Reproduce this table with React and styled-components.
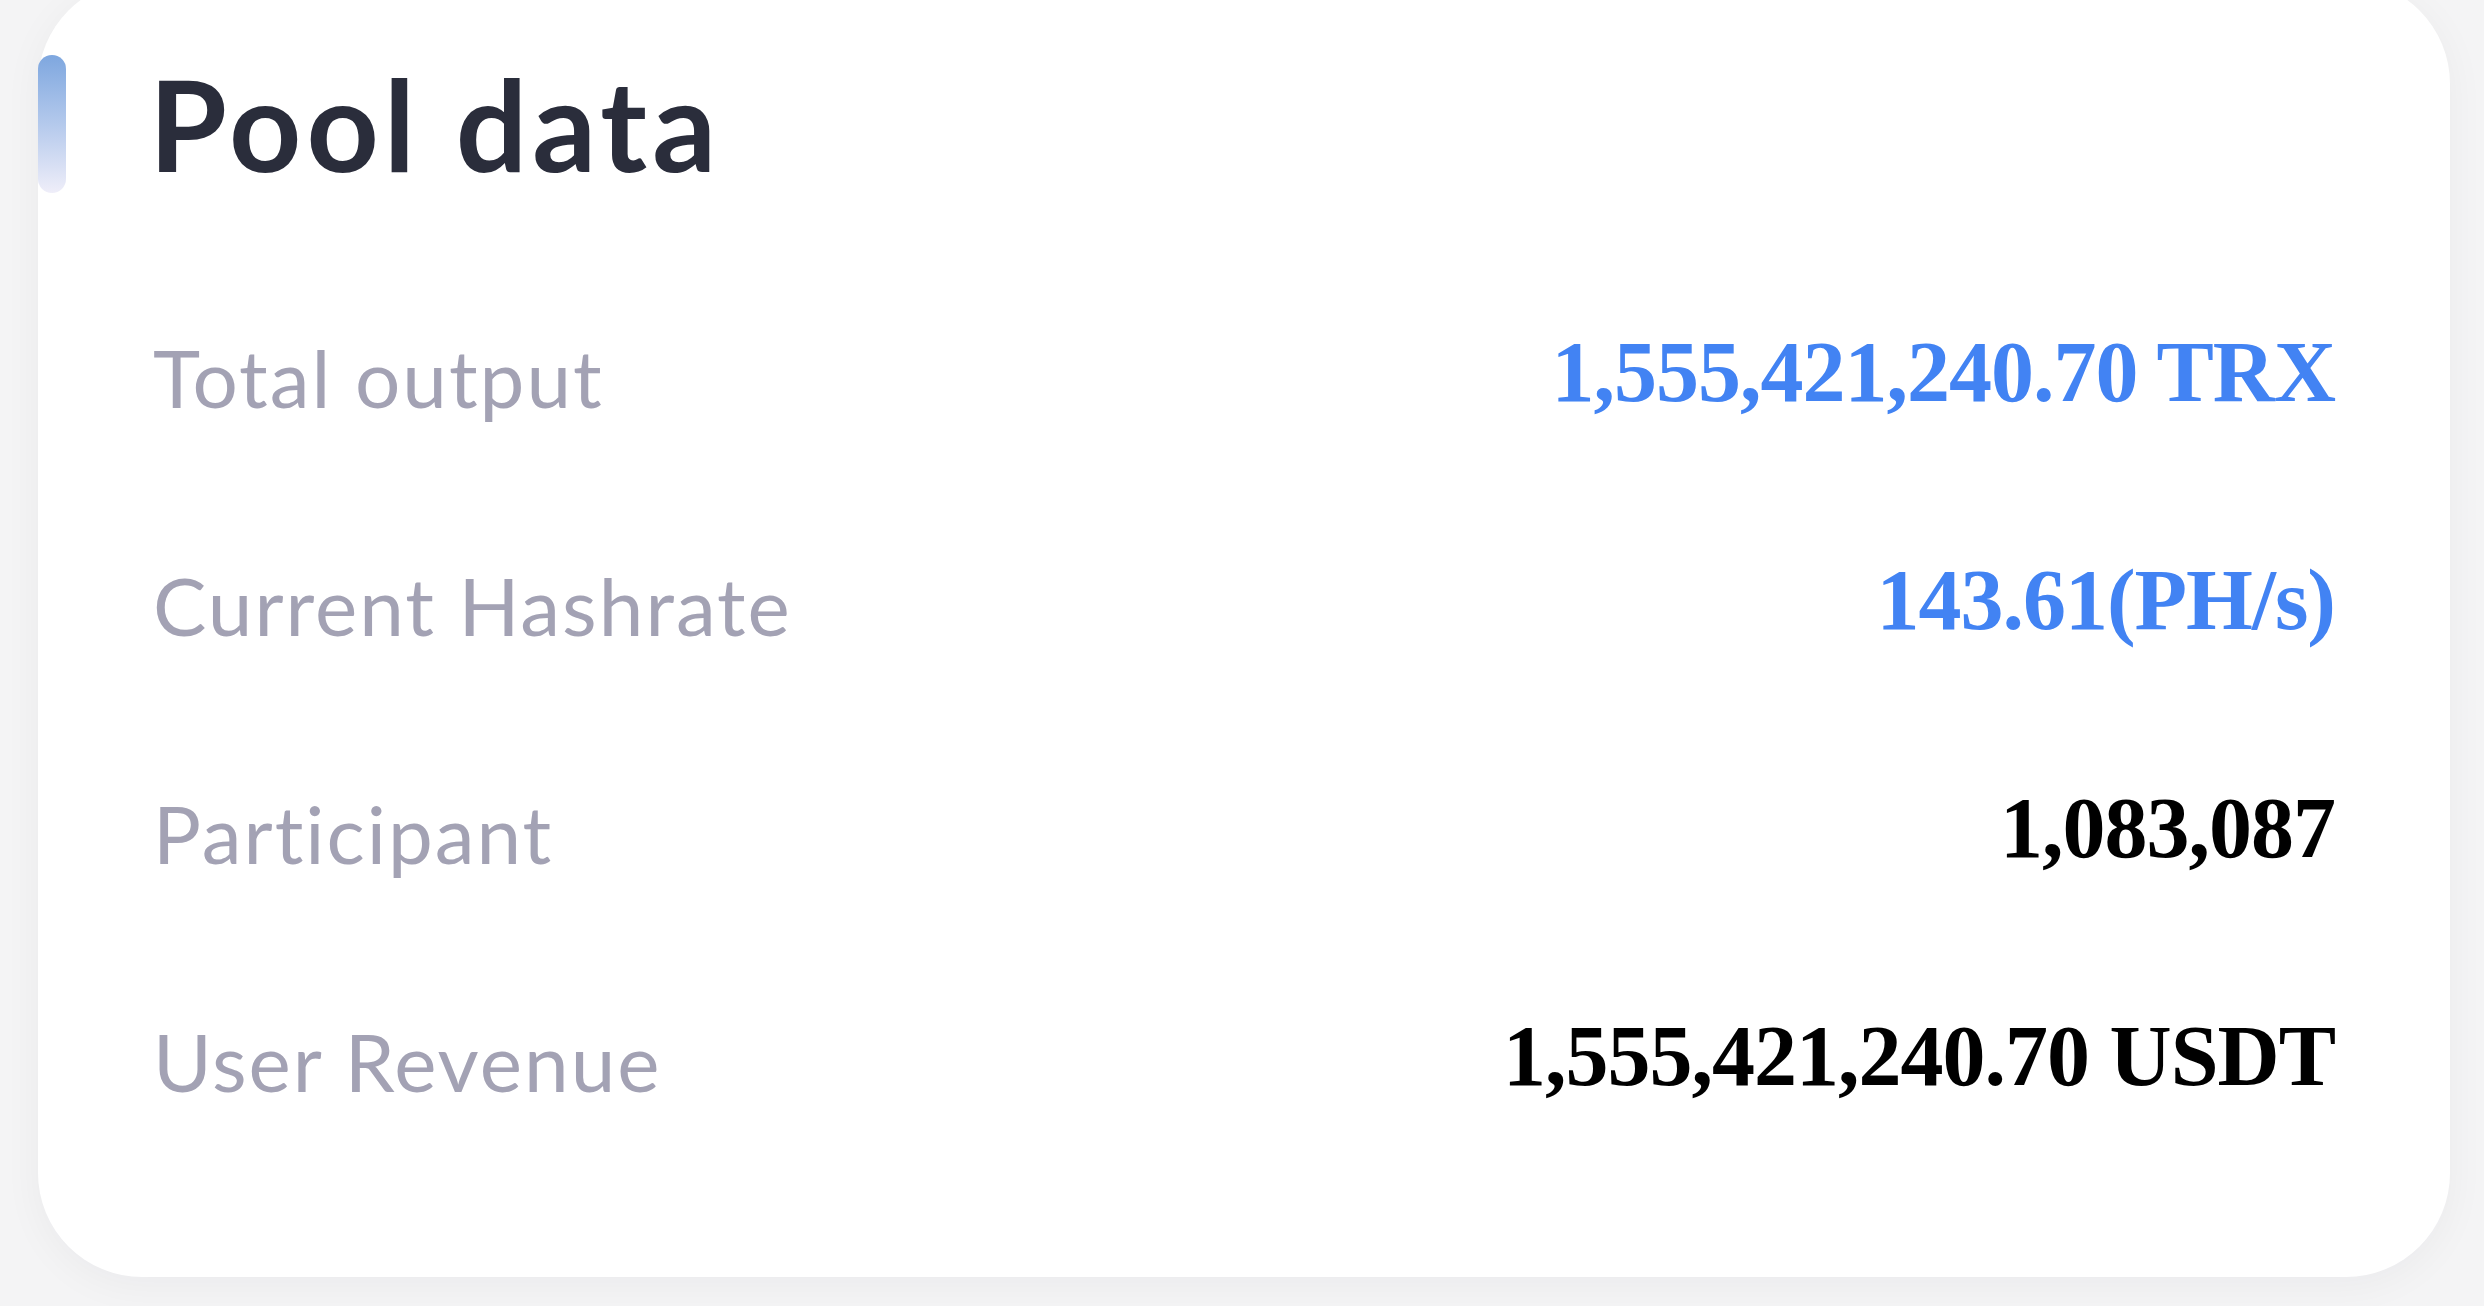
import React from "react";
import styled, { createGlobalStyle } from "styled-components";

const Global = createGlobalStyle`
  html, body { margin: 0; padding: 0; }
  body { background: #f4f4f5; overflow: hidden; }
  * { box-sizing: border-box; }
`;

const Page = styled.div`
  width: 2484px;
  height: 1306px;
  padding: 0 34px 0 38px;
  background: #f4f4f5;
  overflow: hidden;
`;

const Card = styled.section`
  margin-top: -20px;
  height: 1297px;
  background: #ffffff;
  border-radius: 104px;
  box-shadow: 0 8px 40px rgba(20, 20, 40, 0.045);
  padding: 75px 115px 0 0;
  display: flex;
  flex-direction: column;
`;

const Header = styled.div`
  display: flex;
  align-items: center;
  gap: 83px;
  height: 138px;
`;

const Accent = styled.span`
  width: 28px;
  height: 138px;
  border-radius: 14px;
  background: linear-gradient(180deg, #7ea7df 0%, #b4c9ec 50%, #efeef9 100%);
`;

const Title = styled.h1`
  margin: 0;
  font-family: Lato, "Noto Sans", sans-serif;
  font-weight: 700;
  font-size: 126px;
  line-height: 1;
  color: #2a2d3b;
  letter-spacing: 5px;
`;

const List = styled.div`
  margin-top: 70px;
  padding-left: 115px;
  display: flex;
  flex-direction: column;
`;

const Row = styled.div`
  height: 228px;
  display: flex;
  align-items: flex-start;
  justify-content: space-between;
`;

const Label = styled.span`
  font-family: Lato, "Noto Sans", sans-serif;
  font-weight: 400;
  font-size: 80px;
  line-height: 228px;
  letter-spacing: 2px;
  color: #a3a2b4;
`;

const Value = styled.span`
  font-family: "Liberation Serif", "Times New Roman", serif;
  font-weight: 700;
  font-size: 86px;
  line-height: 218px;
  letter-spacing: -1px;
  color: ${(p) => (p.$accent ? "#4283f3" : "#000000")};
  white-space: nowrap;
`;

const rows = [
  { label: "Total output", value: "1,555,421,240.70 TRX", accent: true },
  { label: "Current Hashrate", value: "143.61(PH/s)", accent: true },
  { label: "Participant", value: "1,083,087", accent: false },
  { label: "User Revenue", value: "1,555,421,240.70 USDT", accent: false },
];

export default function App() {
  return (
    <>
      <Global />
      <Page>
        <Card>
          <Header>
            <Accent />
            <Title>Pool data</Title>
          </Header>
          <List>
            {rows.map((r) => (
              <Row key={r.label}>
                <Label>{r.label}</Label>
                <Value $accent={r.accent}>{r.value}</Value>
              </Row>
            ))}
          </List>
        </Card>
      </Page>
    </>
  );
}
